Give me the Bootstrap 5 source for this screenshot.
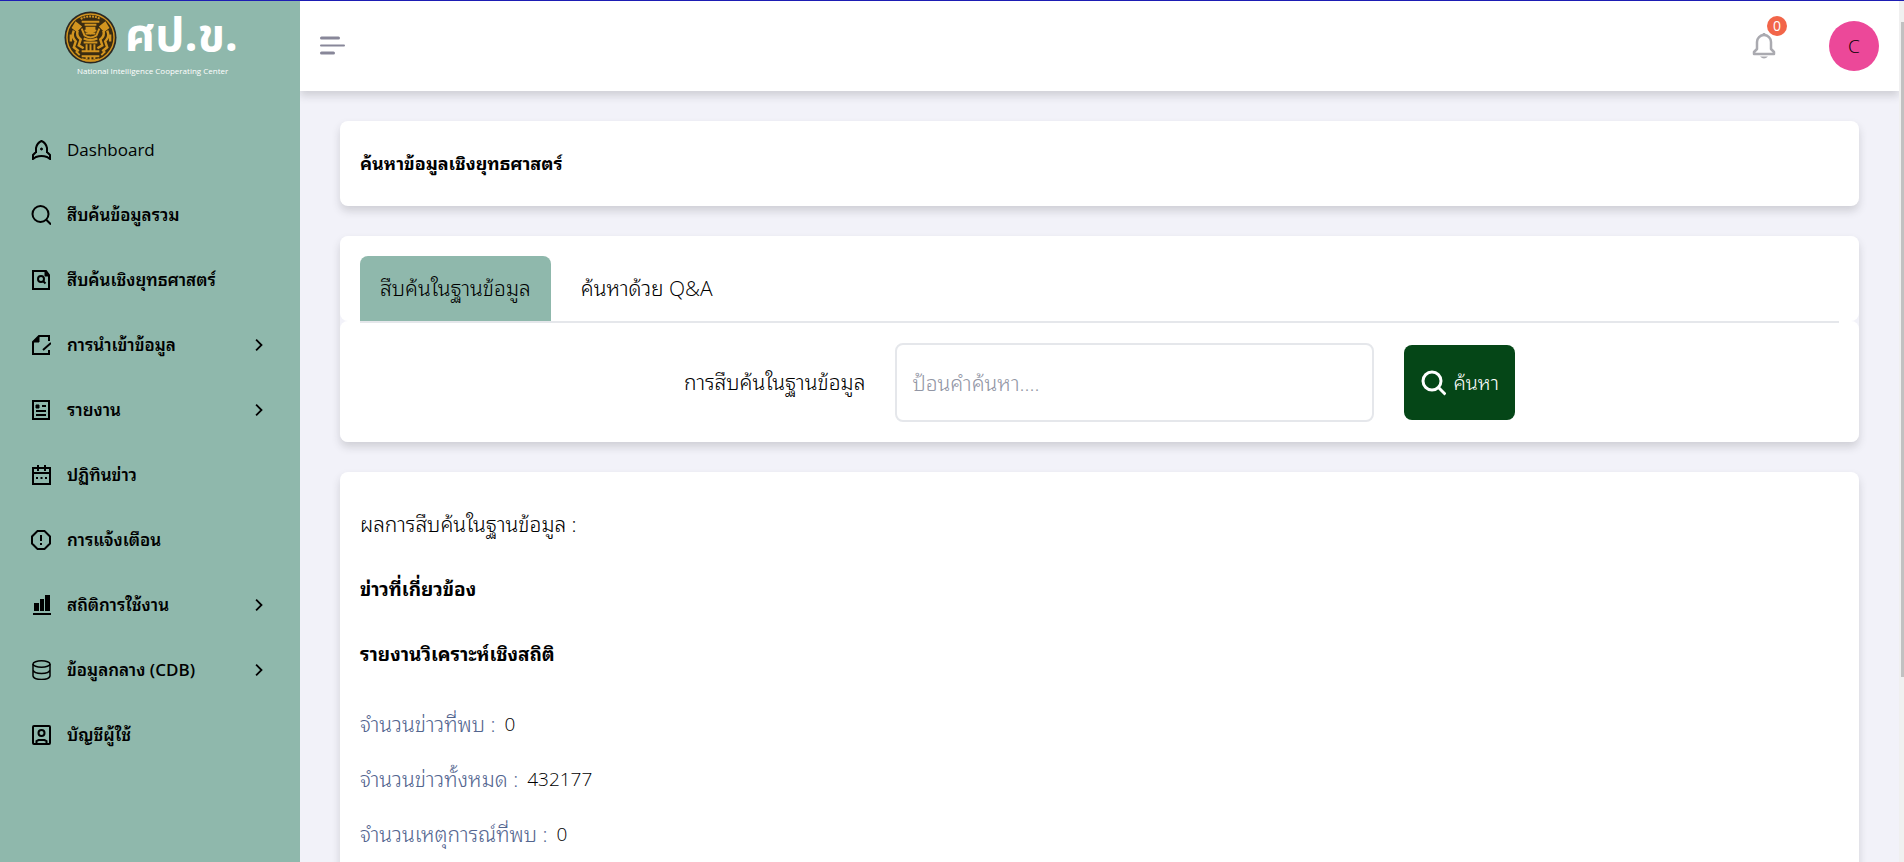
<!DOCTYPE html>
<html lang="th">
<head>
<meta charset="utf-8">
<meta name="viewport" content="width=device-width, initial-scale=1">
<title>ค้นหาข้อมูลเชิงยุทธศาสตร์</title>
<link href="https://cdn.jsdelivr.net/npm/bootstrap@5.3.0/dist/css/bootstrap.min.css" rel="stylesheet">
<style>
:root { --sage: #8fb8ac; --line: #e5e7eb; --ink: #000; --lift: 0 5px 8px rgba(40,40,50,.17); }
body { font-family: "Open Sans", "Noto Sans Thai Looped", "Noto Looped Thai", "Loma", "Noto Sans Thai", "Noto Sans", sans-serif; font-size: 19px; line-height: 25px; color: var(--ink); background: #f2f2f9; border-top: 1px solid #1d1db4; }
.light-text, .light-text button { font-weight: 300; font-size: 21px; }
.side { width: 300px; background: var(--sage); }
.brand { height: 116px; padding: 10px 0 0 64px; color: #fff; font-family: "Noto Sans Thai", "Open Sans", sans-serif; }
.brand-name { font-size: 46px; line-height: 53px; font-weight: 700; }
.brand-sub { font-family: "Open Sans", sans-serif; font-size: 8px; line-height: 14px; padding-left: 13px; }
.side .nav-link { height: 65px; padding: 0 34px 0 31px; color: var(--ink); font-weight: 600; gap: 16px; font-size: 17px; }
.side .nav-link:first-child { font-weight: 500; }
.ico { width: 20px; height: 20px; fill: none; stroke: currentColor; stroke-width: 2; flex: none; }
.chev { width: 18px; height: 18px; stroke-width: 2; }
.topbar { height: 90px; padding: 0 20px; background: #fff; box-shadow: var(--lift); z-index: 1; }
.topbar-tools { gap: 53px; }
.avatar { width: 50px; height: 50px; background: #ec4899; font-weight: 300; font-size: 19px; color: #000; }
.count { width: 20px; height: 20px; top: -17px; right: -11px; background: #f26549; color: #fff; font-size: 14px; line-height: 20px; }
.content { padding: 30px 40px; }
.panel { background: #fff; border-radius: 8px; box-shadow: var(--lift); }
.search-panel { margin: 30px 0; border-radius: 8px; box-shadow: var(--lift); }
.title-panel { padding: 30px 20px; }
.tabs-head { background: #fff; border-radius: 8px; padding: 20px 20px 0; gap: 10px; }
.tabs-head .tab-btn { height: 65px; padding: 0 20px; border: 0; border-radius: 8px 8px 0 0; background: none; color: #000; }
.tabs-head .tab-btn.active { background: var(--sage); }
.search-body { background: #fff; border-radius: 8px; padding: 0 20px; }
.search-row { border-top: 2px solid var(--line); padding: 20px 0; gap: 30px; }
.search-box { width: 479px; height: 79px; border: 2px solid var(--line); border-radius: 8px; padding: 0 15px; font-weight: 300; }
.search-box::placeholder { color: #9296a5; }
.search-row .search-btn { height: 75px; padding: 0 16px; gap: 7px; border: 0; border-radius: 8px; background: #054617; color: #fff; font-size: 20px; }
.heading { font-size: 19px; line-height: 25px; font-weight: 700; margin: 0; }
h1.heading { font-size: 18px; }
.results { padding: 40px 20px; }
.results > * { margin-bottom: 40px; }
.results .stats { padding-top: 5px; }
.stats > div { gap: 9px; margin-bottom: 30px; }
.stats dt { color: #53658f; font-weight: 300; }
.stats dd { font-size: 19px; }
.scroll-track { width: 5px; background: #f0f0f0; padding: 21px 0 0 2px; }
.scroll-thumb { height: 78%; background: #c1c1c1; }
</style>
</head>
<body class="d-flex vh-100 overflow-hidden">
<aside class="side flex-shrink-0">
  <div class="brand">
    <div class="d-flex align-items-start">
      <svg width="53" height="53" viewBox="0 0 54 54" aria-hidden="true">
        <circle cx="27" cy="27" r="26.500" fill="#2b2923"/><circle cx="27" cy="27" r="24" fill="#3a2c12" stroke="#d2941f" stroke-width="1.500"/>
        <g fill="none" stroke="#d2941f" stroke-width="2">
          <path d="M17 8q10-5 20 0" stroke-dasharray="2 1"/>
          <path d="M18 11h18M21 14h12M18 18l3 7q6 4 12 0l3-7M21 20h12M22 23h10"/>
          <path d="M9 17l3-5 5 4-4 4zM45 17l-3-5-5 4 4 4z" fill="#d2941f"/>
          <path d="M10 20q-3 6 2 11l-2 6 5 4M14 20q-2 5 3 9l-2 6 5 3M44 20q3 6-2 11l2 6-5 4M40 20q2 5-3 9l2 6-5 3M7 24v7M47 24v7" stroke-width="2.500"/>
          <path d="M20 28q7 3 14 0M20 32h14M23 34v6M27 34v6M31 34v6M18 41h18"/>
          <path d="M18 46h18M18 49q9 3 18 0M12 41l4 4M42 41l-4 4M23 45v4M27 45v5M31 45v4"/>
        </g>
        <path d="M22 16h10v5l-5 3-5-3z" fill="#d2941f"/>
      </svg>
      <span class="brand-name ms-2">ศป.ข.</span>
    </div>
    <div class="brand-sub">National Intelligence Cooperating Center</div>
  </div>
  <nav class="nav flex-column" aria-label="เมนูหลัก">
    <a class="nav-link d-flex align-items-center" href="#"><svg class="ico" viewBox="0 0 20 20"><path d="M5 13V8q1-5 5.500-7Q15 3 16 8v5M5 12l-3 3v4l3-2q5.500-2 11 0l3 2v-4l-3-3"/><circle cx="10.500" cy="9" r="1" fill="currentColor" stroke-width="1"/></svg>Dashboard</a>
    <a class="nav-link d-flex align-items-center" href="#"><svg class="ico" viewBox="0 0 20 20"><circle cx="9.500" cy="9" r="8"/><path d="M15 14.500l5 5"/></svg>สืบค้นข้อมูลรวม</a>
    <a class="nav-link d-flex align-items-center" href="#"><svg class="ico" viewBox="0 0 20 20"><path d="M2 1h13l3 4v14H2z"/><path d="M14 1v5h4z" fill="currentColor" stroke-width="1"/><circle cx="10" cy="9" r="3"/><path d="M12 11l2.500 2.500"/></svg>สืบค้นเชิงยุทธศาสตร์</a>
    <a class="nav-link d-flex align-items-center" href="#"><svg class="ico" viewBox="0 0 20 20"><path d="M18 6V1H8L2 7v12h16v-4M20 8l-8 7"/><path d="M8 1v6H2z" fill="currentColor" stroke-width="1"/></svg>การนำเข้าข้อมูล<svg class="ms-auto ico chev" viewBox="0 0 20 20"><path d="M9 4l6 6-6 6"/></svg></a>
    <a class="nav-link d-flex align-items-center" href="#"><svg class="ico" viewBox="0 0 20 20"><path d="M2 1h16v18H2zM5 11h10M5 15h10M11 6h4"/><path d="M5 5h3v3H5z" fill="currentColor" stroke-width="1"/></svg>รายงาน<svg class="ms-auto ico chev" viewBox="0 0 20 20"><path d="M9 4l6 6-6 6"/></svg></a>
    <a class="nav-link d-flex align-items-center" href="#"><svg class="ico" viewBox="0 0 20 20"><path d="M2 3h17v16H2zM2 8h17M7 0v6M14 0v6M5 13h2M9.500 13h2M14 13h2"/></svg>ปฏิทินข่าว</a>
    <a class="nav-link d-flex align-items-center" href="#"><svg class="ico" viewBox="0 0 20 20"><path d="M6.500 1h7L19 6.500v7L13.500 19h-7L1 13.500v-7zM10 5v6M10 13v2"/></svg>การแจ้งเตือน</a>
    <a class="nav-link d-flex align-items-center" href="#"><svg class="ico" viewBox="0 0 20 20"><path d="M2 19h18"/><path d="M3 8h5v8H3zM9 4h4v12H9zM14 0h5v16h-5z" fill="currentColor" stroke="none"/></svg>สถิติการใช้งาน<svg class="ms-auto ico chev" viewBox="0 0 20 20"><path d="M9 4l6 6-6 6"/></svg></a>
    <a class="nav-link d-flex align-items-center" href="#"><svg class="ico" viewBox="0 0 20 20"><g stroke-width="1.500"><ellipse cx="10.500" cy="4" rx="8.500" ry="3.200"/><path d="M2 4v12q1 3.500 8.500 3.500T19 16V4M2 10q1 3.500 8.500 3.500T19 10"/></g></svg>ข้อมูลกลาง (CDB)<svg class="ms-auto ico chev" viewBox="0 0 20 20"><path d="M9 4l6 6-6 6"/></svg></a>
    <a class="nav-link d-flex align-items-center" href="#"><svg class="ico" viewBox="0 0 20 20"><rect x="2" y="1" width="17" height="18" rx="1"/><circle cx="10.500" cy="8" r="3"/><path d="M5.500 19v-3l2-1h6l2 1v3"/></svg>บัญชีผู้ใช้</a>
  </nav>
</aside>
<div class="d-flex flex-column flex-grow-1 overflow-hidden">
  <header class="topbar d-flex align-items-center justify-content-between flex-shrink-0">
    <button class="btn p-0 border-0" type="button" aria-label="เมนู"><svg class="d-block" width="25" height="20" viewBox="0 0 25 20" stroke="#888799" stroke-linecap="round"><path d="M1.500 2h17M1.500 17h12" stroke-width="3"/><path d="M1 9.500h23" stroke-width="2"/></svg></button>
    <div class="topbar-tools d-flex align-items-center">
      <button class="btn p-0 border-0 position-relative" type="button" aria-label="การแจ้งเตือน">
        <svg class="d-block" width="24" height="26" viewBox="0 0 24 26" fill="none" stroke="#aaaab0" stroke-width="2.500"><path d="M2 21v-2l3-3V9a7 7 0 0 1 14 0v7l3 3v2z" stroke-linejoin="round"/><path d="M12 0v3"/><path d="M8 23.500h8q-4 4-8 0z" fill="#aaaab0" stroke="none"/></svg>
        <span class="count position-absolute rounded-circle">0</span>
      </button>
      <button class="avatar btn rounded-circle border-0 p-0" type="button">C</button>
    </div>
  </header>
  <main class="content">
    <section class="panel title-panel"><h1 class="heading">ค้นหาข้อมูลเชิงยุทธศาสตร์</h1></section>
    <section class="search-panel light-text">
      <div class="tabs-head d-flex" role="tablist">
        <button class="tab-btn active" type="button" role="tab" aria-selected="true">สืบค้นในฐานข้อมูล</button>
        <button class="tab-btn" type="button" role="tab" aria-selected="false">ค้นหาด้วย Q&amp;A</button>
      </div>
      <div class="search-body">
        <form class="search-row d-flex align-items-center justify-content-center">
          <label for="q">การสืบค้นในฐานข้อมูล</label>
          <input class="search-box" id="q" type="text" placeholder="ป้อนคำค้นหา....">
          <button class="search-btn d-flex align-items-center" type="button"><svg width="26" height="26" viewBox="0 0 26 26" fill="none" stroke="#fff" stroke-width="3"><circle cx="12" cy="11" r="9"/><path d="M18.500 17.500l7 7"/></svg>ค้นหา</button>
        </form>
      </div>
    </section>
    <section class="panel results">
      <p class="light-text">ผลการสืบค้นในฐานข้อมูล :</p>
      <h2 class="heading">ข่าวที่เกี่ยวข้อง</h2>
      <h2 class="heading">รายงานวิเคราะห์เชิงสถิติ</h2>
      <dl class="stats light-text">
        <div class="d-flex"><dt>จำนวนข่าวที่พบ :</dt><dd class="m-0">0</dd></div>
        <div class="d-flex"><dt>จำนวนข่าวทั้งหมด :</dt><dd class="m-0">432177</dd></div>
        <div class="d-flex"><dt>จำนวนเหตุการณ์ที่พบ :</dt><dd class="m-0">0</dd></div>
      </dl>
    </section>
  </main>
</div>
<div class="scroll-track flex-shrink-0" aria-hidden="true"><div class="scroll-thumb"></div></div>
<script src="https://cdn.jsdelivr.net/npm/bootstrap@5.3.0/dist/js/bootstrap.bundle.min.js"></script>
</body>
</html>
